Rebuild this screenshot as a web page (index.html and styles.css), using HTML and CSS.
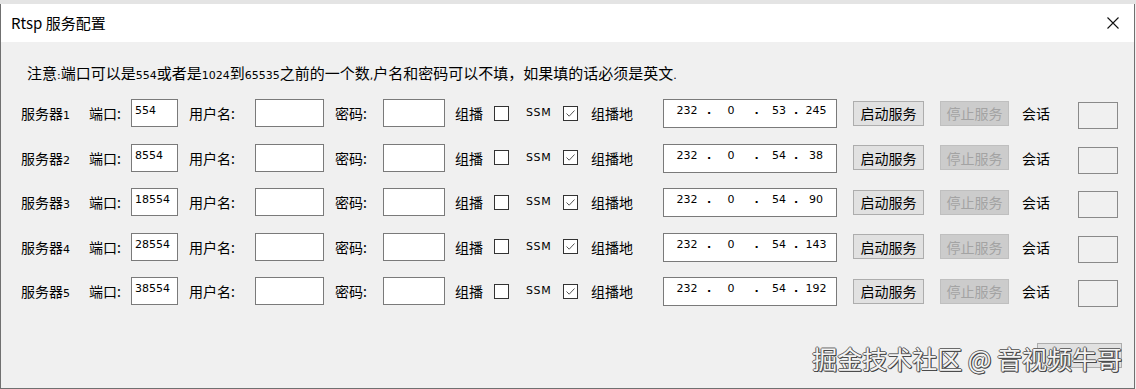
FILE: index.html
```html
<!DOCTYPE html>
<html lang="zh-CN">
<head>
  <meta charset="UTF-8" />
  <title>Rtsp 服务配置</title>
  <link rel="stylesheet" href="styles.css">
</head>
<body>
  <div class="backdrop"></div>
  <div class="dialog">
    <div class="titlebar">
      <span class="title">Rtsp 服务配置</span>
      <svg class="close" width="12" height="12" viewBox="0 0 12 12">
        <path d="M0.5 0.5 L11.5 11.5 M11.5 0.5 L0.5 11.5" stroke="#111" stroke-width="1.1" fill="none" />
      </svg>
    </div>

    <div class="content">
      <p class="note">注意<span class="n">:</span>端口可以是<span class="n">554</span>或者是<span class="n">1024</span>到<span class="n">65535</span>之前的一个数<span class="n">,</span>户名和密码可以不填，如果填的话必须是英文<span class="n">.</span></p>

      <div class="rows">
        <div class="row">
          <span class="srv">服务器<span class="n">1</span></span>
          <span class="lbl-port">端口:</span>
          <div class="field port">554</div>
          <span class="lbl-user">用户名:</span>
          <div class="field user"></div>
          <span class="lbl-pass">密码:</span>
          <div class="field pass"></div>
          <span class="lbl-mc">组播</span>
          <span class="chk"></span>
          <span class="ssm">SSM</span>
          <span class="chk"><svg width="13" height="13" viewBox="0 0 13 13"><path d="M2.5 6.5 L5.2 9.2 L10.5 3.5" stroke="#555" stroke-width="1" fill="none" /></svg></span>
          <span class="lbl-addr">组播地</span>
          <div class="ip"><span class="f1">232</span><span class="d1">.</span><span class="f2">0</span><span class="d2">.</span><span class="f3">53</span><span class="d3">.</span><span class="f4">245</span></div>
          <button class="btn">启动服务</button>
          <button class="btn off">停止服务</button>
          <span class="lbl-sess">会话</span>
          <div class="sess"></div>
        </div>

        <div class="row">
          <span class="srv">服务器<span class="n">2</span></span>
          <span class="lbl-port">端口:</span>
          <div class="field port">8554</div>
          <span class="lbl-user">用户名:</span>
          <div class="field user"></div>
          <span class="lbl-pass">密码:</span>
          <div class="field pass"></div>
          <span class="lbl-mc">组播</span>
          <span class="chk"></span>
          <span class="ssm">SSM</span>
          <span class="chk"><svg width="13" height="13" viewBox="0 0 13 13"><path d="M2.5 6.5 L5.2 9.2 L10.5 3.5" stroke="#555" stroke-width="1" fill="none" /></svg></span>
          <span class="lbl-addr">组播地</span>
          <div class="ip"><span class="f1">232</span><span class="d1">.</span><span class="f2">0</span><span class="d2">.</span><span class="f3">54</span><span class="d3">.</span><span class="f4">38</span></div>
          <button class="btn">启动服务</button>
          <button class="btn off">停止服务</button>
          <span class="lbl-sess">会话</span>
          <div class="sess"></div>
        </div>

        <div class="row">
          <span class="srv">服务器<span class="n">3</span></span>
          <span class="lbl-port">端口:</span>
          <div class="field port">18554</div>
          <span class="lbl-user">用户名:</span>
          <div class="field user"></div>
          <span class="lbl-pass">密码:</span>
          <div class="field pass"></div>
          <span class="lbl-mc">组播</span>
          <span class="chk"></span>
          <span class="ssm">SSM</span>
          <span class="chk"><svg width="13" height="13" viewBox="0 0 13 13"><path d="M2.5 6.5 L5.2 9.2 L10.5 3.5" stroke="#555" stroke-width="1" fill="none" /></svg></span>
          <span class="lbl-addr">组播地</span>
          <div class="ip"><span class="f1">232</span><span class="d1">.</span><span class="f2">0</span><span class="d2">.</span><span class="f3">54</span><span class="d3">.</span><span class="f4">90</span></div>
          <button class="btn">启动服务</button>
          <button class="btn off">停止服务</button>
          <span class="lbl-sess">会话</span>
          <div class="sess"></div>
        </div>

        <div class="row">
          <span class="srv">服务器<span class="n">4</span></span>
          <span class="lbl-port">端口:</span>
          <div class="field port">28554</div>
          <span class="lbl-user">用户名:</span>
          <div class="field user"></div>
          <span class="lbl-pass">密码:</span>
          <div class="field pass"></div>
          <span class="lbl-mc">组播</span>
          <span class="chk"></span>
          <span class="ssm">SSM</span>
          <span class="chk"><svg width="13" height="13" viewBox="0 0 13 13"><path d="M2.5 6.5 L5.2 9.2 L10.5 3.5" stroke="#555" stroke-width="1" fill="none" /></svg></span>
          <span class="lbl-addr">组播地</span>
          <div class="ip"><span class="f1">232</span><span class="d1">.</span><span class="f2">0</span><span class="d2">.</span><span class="f3">54</span><span class="d3">.</span><span class="f4">143</span></div>
          <button class="btn">启动服务</button>
          <button class="btn off">停止服务</button>
          <span class="lbl-sess">会话</span>
          <div class="sess"></div>
        </div>

        <div class="row">
          <span class="srv">服务器<span class="n">5</span></span>
          <span class="lbl-port">端口:</span>
          <div class="field port">38554</div>
          <span class="lbl-user">用户名:</span>
          <div class="field user"></div>
          <span class="lbl-pass">密码:</span>
          <div class="field pass"></div>
          <span class="lbl-mc">组播</span>
          <span class="chk"></span>
          <span class="ssm">SSM</span>
          <span class="chk"><svg width="13" height="13" viewBox="0 0 13 13"><path d="M2.5 6.5 L5.2 9.2 L10.5 3.5" stroke="#555" stroke-width="1" fill="none" /></svg></span>
          <span class="lbl-addr">组播地</span>
          <div class="ip"><span class="f1">232</span><span class="d1">.</span><span class="f2">0</span><span class="d2">.</span><span class="f3">54</span><span class="d3">.</span><span class="f4">192</span></div>
          <button class="btn">启动服务</button>
          <button class="btn off">停止服务</button>
          <span class="lbl-sess">会话</span>
          <div class="sess"></div>
        </div>
      </div>

      <div class="footer">
        <button class="btn close-btn"></button>
      </div>
    </div>

    <div class="watermark">掘金技术社区 @ 音视频牛哥</div>
  </div>
</body>
</html>
```

FILE: styles.css
```css
body {
  margin: 0;
  width: 1136px;
  height: 389px;
  overflow: hidden;
  background: #f0f0f0;
  font-family: 'Noto Sans CJK SC', sans-serif;
  color: #000;
}

.backdrop {
  height: 4px;
  background: #e4e4e4;
}

.dialog {
  position: relative;
  box-sizing: border-box;
  width: 1135px;
  height: 385px;
  background: #f0f0f0;
  border-left: 1px solid #707070;
  border-right: 1px solid #707070;
  border-bottom: 1px solid #707070;
}

.titlebar {
  height: 38px;
  background: #fff;
  display: flex;
  align-items: center;
  padding-left: 10px;
}

.title {
  font-size: 15px;
  line-height: 20px;
}

.close {
  margin-left: auto;
  margin-right: 15px;
}

.content {
  padding: 0 12px 0 19px;
}

.note {
  height: 22px;
  margin: 20px 0 0 7px;
  font-size: 15px;
  line-height: 22px;
  white-space: nowrap;
}

.n {
  font-family: 'DejaVu Sans', sans-serif;
  font-size: 11px;
  line-height: 1;
}

.rows {
  margin-top: 15px;
  display: flex;
  flex-direction: column;
  gap: 16.5px;
}

.row {
  height: 28px;
  display: flex;
  align-items: center;
  font-size: 14px;
  line-height: 20px;
  white-space: nowrap;
}

.srv { width: 68px; padding-left: 1px; }
.lbl-port { width: 42px; }
.lbl-user { width: 66px; margin-left: 11px; }
.lbl-pass { width: 48px; margin-left: 11px; }
.lbl-mc { width: 39px; margin-left: 10px; }
.lbl-addr { width: 72px; margin-left: 13px; }
.lbl-sess { width: 56px; margin-left: 13px; }

.ssm {
  width: 37px;
  margin-left: 17px;
  font-family: 'DejaVu Sans', sans-serif;
  font-size: 11px;
  letter-spacing: 0.6px;
}

.field {
  box-sizing: border-box;
  height: 28px;
  background: #fff;
  border: 1px solid #7a7a7a;
  padding: 4px 0 0 3px;
  font-family: 'DejaVu Sans', sans-serif;
  font-size: 11px;
  line-height: 14px;
}

.port { width: 47px; }
.user { width: 69px; }
.pass { width: 62px; }

.chk {
  box-sizing: border-box;
  width: 15px;
  height: 15px;
  background: #fff;
  border: 1px solid #333;
  display: flex;
}

.ip {
  box-sizing: border-box;
  width: 174px;
  height: 29px;
  margin-top: 1px;
  background: #fff;
  border: 1px solid #7a7a7a;
  padding: 4px 0 0 5px;
  display: flex;
  font-family: 'DejaVu Sans', sans-serif;
  font-size: 11px;
  line-height: 14px;
}

.ip span { text-align: center; }
.ip .f1 { width: 36px; }
.ip .d1 { width: 8px; }
.ip .f2 { width: 36px; }
.ip .d2 { width: 15px; }
.ip .f3 { width: 30px; }
.ip .d3 { width: 4px; }
.ip .f4 { width: 36px; }
.ip .d1, .ip .d2, .ip .d3 { font-weight: bold; }

.btn {
  box-sizing: border-box;
  width: 71px;
  height: 25px;
  margin-left: 16px;
  padding: 0;
  background: #e1e1e1;
  border: 1px solid #adadad;
  font-family: 'Noto Sans CJK SC', sans-serif;
  font-size: 14px;
  color: #000;
}

.btn.off {
  width: 69px;
  background: #cccccc;
  border-color: #bfbfbf;
  color: #a3a3a3;
}

.sess {
  box-sizing: border-box;
  width: 40px;
  height: 27px;
  margin-top: 5px;
  border: 1px solid #8a8a8a;
  background: #f0f0f0;
}

.footer {
  margin-top: 38px;
  display: flex;
  justify-content: flex-end;
}

.close-btn {
  width: 85px;
  margin-left: 0;
}

.watermark {
  position: absolute;
  right: 12px;
  top: 338px;
  font-size: 25px;
  line-height: 32px;
  color: #f4f4f4;
  white-space: nowrap;
  text-shadow: 1px 0 #4a4a4a, 0 1px #4a4a4a, -1px 0 #6a6a6a, 0 -1px #6a6a6a, 1px 1px #333;
}
```
